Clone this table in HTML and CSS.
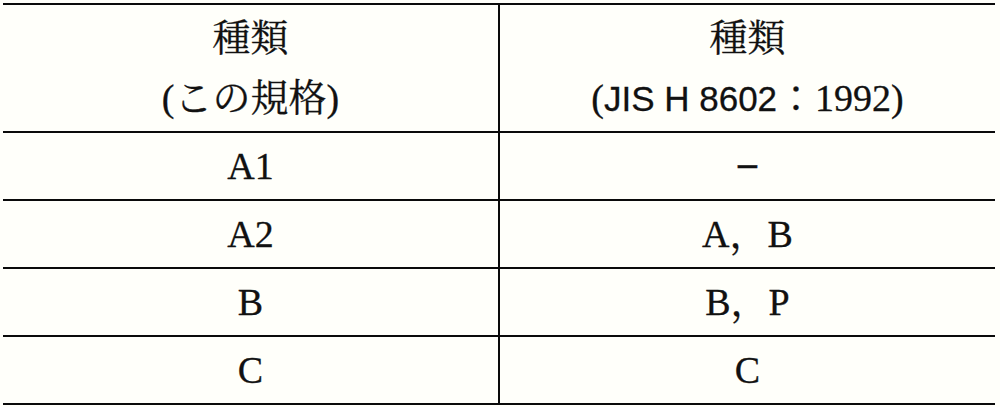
FILE: index.html
```html
<!DOCTYPE html>
<html lang="ja">
<head>
<meta charset="utf-8">
<link rel="stylesheet" href="styles.css">
</head>
<body>
<table class="types">
  <colgroup><col class="c1"><col class="c2"></colgroup>
  <thead>
    <tr>
      <th>種類<br>(この規格)</th>
      <th>種類<br>(<span class="sans">JIS H 8602</span>：1992)</th>
    </tr>
  </thead>
  <tbody>
    <tr><td>A1</td><td><span class="dash">−</span></td></tr>
    <tr><td>A2</td><td>A，B</td></tr>
    <tr><td>B</td><td>B，P</td></tr>
    <tr><td>C</td><td>C</td></tr>
  </tbody>
</table>
</body>
</html>
```
FILE: styles.css
```css
html, body {
  margin: 0;
  padding: 0;
  background: #fffffa;
}
body {
  padding: 3px 0 0 3px;
}
.types {
  border-collapse: collapse;
  width: 992px;
  table-layout: fixed;
  font-family: "Liberation Serif", "Noto Serif CJK JP", "Noto Sans CJK JP", serif;
  font-size: 38px;
  color: #111;
  -webkit-text-stroke: 0.3px #111;
}
.c1 { width: 496px; }
.c2 { width: 496px; }
.types th, .types td {
  text-align: center;
  vertical-align: middle;
  padding: 0;
  border-top: 2px solid #0a0a0a;
  border-bottom: 2px solid #0a0a0a;
}
.types th + th, .types td + td {
  border-left: 2px solid #0a0a0a;
}
.types th {
  font-weight: normal;
  height: 126px;
  line-height: 60px;
}
.types td {
  height: 66px;
  line-height: 44px;
}
.sans {
  font-family: "Liberation Sans", "Noto Sans CJK JP", sans-serif;
  font-size: 35px;
}
.dash {
  font-family: "Liberation Sans", sans-serif;
  font-size: 40px;
}
```
